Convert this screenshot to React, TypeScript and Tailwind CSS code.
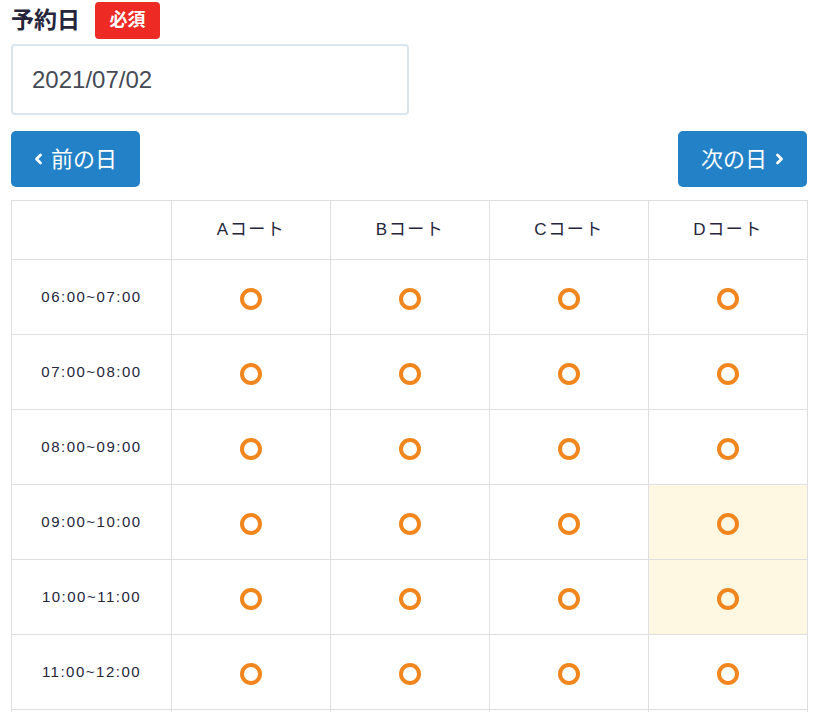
import React from 'react'

// ── Data ──────────────────────────────────────────────────────────────────────

const COURTS = ['Aコート', 'Bコート', 'Cコート', 'Dコート']

const SLOTS = [
  '06:00~07:00',
  '07:00~08:00',
  '08:00~09:00',
  '09:00~10:00',
  '10:00~11:00',
  '11:00~12:00',
]

// cells highlighted as selected: `${slotIndex}-${courtIndex}`
const SELECTED = new Set(['3-3', '4-3'])

const FONT = '"Liberation Sans", "Noto Sans CJK JP", sans-serif'

// ── Small pieces ──────────────────────────────────────────────────────────────

function Chevron({ dir }: { dir: 'left' | 'right' }) {
  return (
    <svg width="9" height="14" viewBox="0 0 9 14" fill="none">
      <polyline
        points={dir === 'left' ? '6.5,3 2.5,7 6.5,11' : '2.5,3 6.5,7 2.5,11'}
        stroke="currentColor"
        strokeWidth="2.8"
        strokeLinecap="round"
        strokeLinejoin="round"
      />
    </svg>
  )
}

function Available() {
  return (
    <span className="block mx-auto mt-[4px] w-[22px] h-[22px] rounded-full border-[4px] border-[#f0861d]" />
  )
}

function NavButton({ dir, label }: { dir: 'left' | 'right'; label: string }) {
  return (
    <button
      type="button"
      className="flex items-center justify-center gap-[8px] w-[129px] h-[56px] rounded-[5px] bg-[#2382c7] text-white text-[22px]"
    >
      {dir === 'left' && <Chevron dir="left" />}
      <span>{label}</span>
      {dir === 'right' && <Chevron dir="right" />}
    </button>
  )
}

// ── Page ──────────────────────────────────────────────────────────────────────

export default function App() {
  return (
    <div className="w-[819px] h-[712px] overflow-hidden bg-white pl-[11px] pr-[12px]" style={{ fontFamily: FONT }}>
      {/* Label + required badge */}
      <div className="flex items-center gap-[15px] pt-[2px]">
        <span className="text-[23px] font-bold text-[#25253b] leading-none">予約日</span>
        <span className="flex items-center justify-center w-[65px] h-[37px] rounded-[4px] bg-[#ee2a24] text-white text-[18px] font-bold">
          必須
        </span>
      </div>

      {/* Date input */}
      <div className="mt-[5px] w-[398px] h-[71px] flex items-center rounded-[4px] border-2 border-[#d9e6ef] px-[19px] text-[24px] text-[#454a55]">
        2021/07/02
      </div>

      {/* Prev / next */}
      <div className="mt-[16px] flex justify-between">
        <NavButton dir="left" label="前の日" />
        <NavButton dir="right" label="次の日" />
      </div>

      {/* Availability table */}
      <table className="mt-[13px] w-[797px] table-fixed border-collapse text-[#25253b]">
        <colgroup>
          <col className="w-[160px]" />
          <col />
          <col />
          <col />
          <col />
        </colgroup>
        <thead>
          <tr className="h-[59px]">
            <th className="border border-[#dfdfdf]" />
            {COURTS.map((c) => (
              <th key={c} className="border border-[#dfdfdf] font-normal text-[17px] tracking-[1.5px]">
                {c}
              </th>
            ))}
          </tr>
        </thead>
        <tbody>
          {SLOTS.map((slot, i) => (
            <tr key={slot} className="h-[75px]">
              <td className="border border-[#dfdfdf] text-center text-[15px] tracking-[1.5px]">{slot}</td>
              {COURTS.map((c, j) => (
                <td
                  key={c}
                  className={
                    SELECTED.has(`${i}-${j}`)
                      ? 'border border-[#dfdfdf] bg-[#fef8e2]'
                      : 'border border-[#dfdfdf]'
                  }
                >
                  <Available />
                </td>
              ))}
            </tr>
          ))}
          <tr className="h-[75px]">
            <td className="border border-[#dfdfdf]" />
            {COURTS.map((c) => (
              <td key={c} className="border border-[#dfdfdf]" />
            ))}
          </tr>
        </tbody>
      </table>
    </div>
  )
}
